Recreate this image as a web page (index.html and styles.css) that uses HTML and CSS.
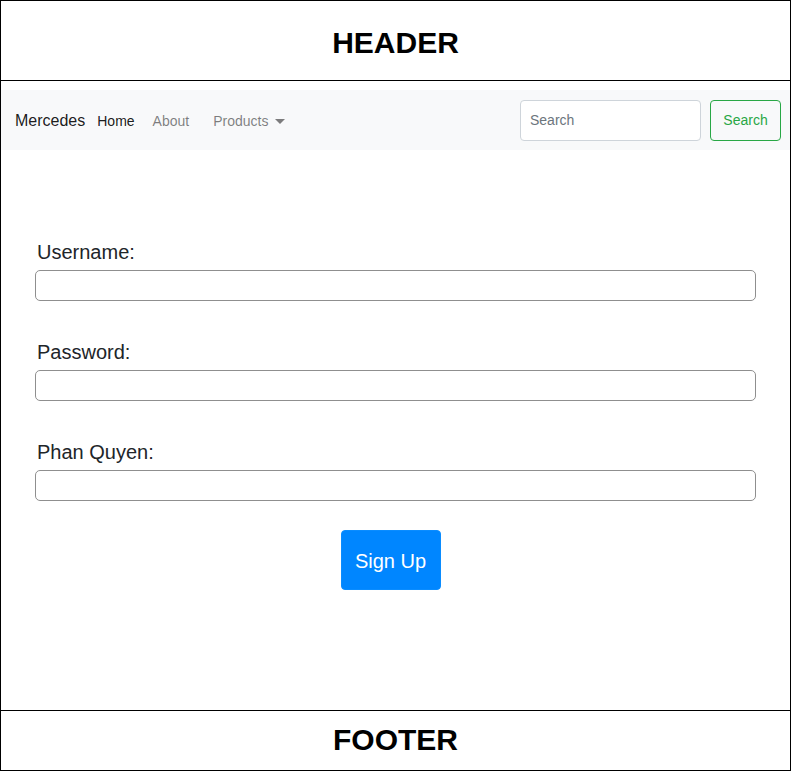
FILE: index.html
```html
<!DOCTYPE html>
<html lang="en">
<head>
<meta charset="utf-8">
<title>Sign Up</title>
<link rel="stylesheet" href="styles.css">
</head>
<body>
<div class="page">
  <header class="header"><h1 class="header-title">HEADER</h1></header>
  <main class="main">
    <nav class="navbar">
      <a class="brand" href="#">Mercedes</a>
      <a class="nav-link active" href="#">Home</a>
      <a class="nav-link" href="#">About</a>
      <a class="nav-link dropdown" href="#">Products<span class="caret"></span></a>
      <form class="search-form">
        <input class="search-input" type="text" placeholder="Search">
        <button class="search-btn" type="button">Search</button>
      </form>
    </nav>
    <form class="signup">
      <div class="field">
        <label class="label" for="u">Username:</label>
        <input class="input" id="u" type="text">
      </div>
      <div class="field">
        <label class="label" for="p">Password:</label>
        <input class="input" id="p" type="password">
      </div>
      <div class="field last">
        <label class="label" for="q">Phan Quyen:</label>
        <input class="input" id="q" type="text">
      </div>
      <div class="actions">
        <button class="submit" type="button">Sign Up</button>
      </div>
    </form>
  </main>
  <footer class="footer"><h2 class="footer-title">FOOTER</h2></footer>
</div>
</body>
</html>
```

FILE: styles.css
```css
* { box-sizing: border-box; }
html, body { margin: 0; padding: 0; background: #fff; }
body { font-family: "Liberation Sans", Arial, sans-serif; color: #212529; }

.page {
  width: 791px;
  height: 771px;
  border: 1px solid #000;
  display: flex;
  flex-direction: column;
}

.header {
  height: 80px;
  border-bottom: 1px solid #000;
  display: flex;
  justify-content: center;
  align-items: center;
  padding-top: 6px;
}
.header-title, .footer-title {
  margin: 0;
  font-size: 30px;
  font-weight: bold;
  color: #000;
  line-height: 1.15;
}

.main {
  flex: 1;
  padding-top: 9px;
}

.navbar {
  height: 60px;
  background: #f8f9fa;
  display: flex;
  align-items: center;
  padding: 0 9px 0 14px;
}
.brand {
  font-size: 16px;
  color: rgba(0,0,0,.9);
  text-decoration: none;
  margin-right: 3px;
  padding-top: 2px;
}
.nav-link {
  font-size: 14px;
  color: rgba(0,0,0,.5);
  text-decoration: none;
  padding: 2px 9px 0;
}
.nav-link.active { color: rgba(0,0,0,.9); }
.nav-link.dropdown { margin-left: 6px; display: inline-flex; align-items: center; }
.caret {
  display: inline-block;
  margin-left: 7px;
  width: 0;
  height: 0;
  border-top: 5px solid rgba(0,0,0,.5);
  border-left: 5px solid transparent;
  border-right: 5px solid transparent;
}

.search-form {
  margin: 0 0 0 auto;
  display: flex;
  align-items: center;
}
.search-input {
  width: 181px;
  height: 41px;
  border: 1px solid #ced4da;
  border-radius: 4px;
  padding: 0 9px;
  font-family: inherit;
  font-size: 14px;
  color: #495057;
  background: #fff;
  margin-right: 9px;
}
.search-input::placeholder { color: #6c757d; }
.search-btn {
  height: 41px;
  width: 71px;
  padding: 0;
  border: 1px solid #28a745;
  border-radius: 4px;
  background: transparent;
  color: #28a745;
  font-family: inherit;
  font-size: 14px;
}

.signup {
  margin: 91px 0 0;
  padding: 0 34px;
}
.field { margin-bottom: 40px; }
.field.last { margin-bottom: 29px; }
.label {
  display: block;
  font-size: 20px;
  line-height: 23px;
  padding-left: 2px;
  margin-bottom: 6px;
  color: #212529;
}
.input {
  display: block;
  width: 100%;
  height: 31px;
  border: 1px solid #8f8f8f;
  border-radius: 5px;
  background: #fff;
  font-family: inherit;
  font-size: 16px;
  padding: 0 6px;
}
.actions {
  display: flex;
  justify-content: center;
}
.submit {
  width: 100px;
  height: 60px;
  margin-right: 10px;
  border: 1px solid #0a8cff;
  border-radius: 4px;
  background: #0086ff;
  color: #fff;
  font-family: inherit;
  font-size: 20px;
  padding: 2px 0 0;
}

.footer {
  height: 60px;
  border-top: 1px solid #000;
  display: flex;
  justify-content: center;
  align-items: center;
}
```
